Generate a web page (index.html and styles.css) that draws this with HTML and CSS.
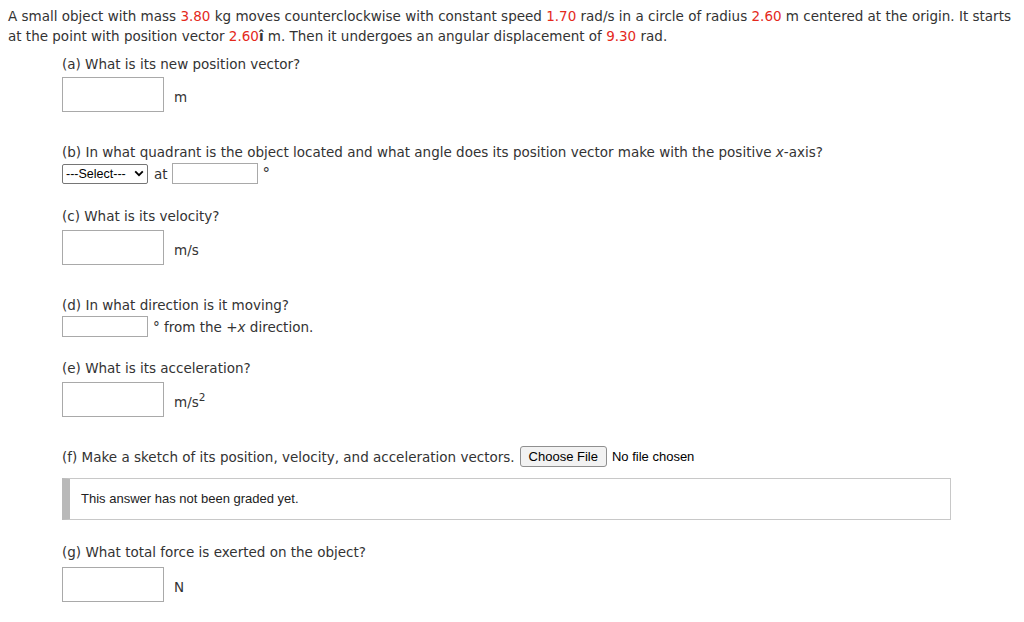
FILE: index.html
```html
<!DOCTYPE html>
<html>
<head>
<meta charset="utf-8">
<link rel="stylesheet" href="styles.css">
</head>
<body>
<p class="intro">A small object with mass <span class="red">3.80</span> kg moves counterclockwise with constant speed <span class="red">1.70</span> rad/s in a circle of radius <span class="red">2.60</span> m centered at the origin. It starts at the point with position vector <span class="red">2.60</span><b class="hat">î</b> m. Then it undergoes an angular displacement of <span class="red">9.30</span> rad.</p>

<div class="parts">
  <div class="part part-a">
    <div class="label">(a) What is its new position vector?</div>
    <div class="row big"><span class="box"></span><span class="unit">m</span></div>
  </div>

  <div class="part part-b">
    <div class="label">(b) In what quadrant is the object located and what angle does its position vector make with the positive <i>x</i>-axis?</div>
    <div class="row small">
      <span class="select">---Select---<svg class="chev" width="10" height="7" viewBox="0 0 10 7"><path d="M1.2 1.3 L5 5.2 L8.8 1.3" fill="none" stroke="#000" stroke-width="1.8"/></svg></span>
      <span class="at">at</span>
      <span class="box sm"></span>
      <span class="deg">°</span>
    </div>
  </div>

  <div class="part part-c">
    <div class="label">(c) What is its velocity?</div>
    <div class="row big"><span class="box"></span><span class="unit">m/s</span></div>
  </div>

  <div class="part part-d">
    <div class="label">(d) In what direction is it moving?</div>
    <div class="row small"><span class="box sm"></span><span class="dir">° from the +<i>x</i> direction.</span></div>
  </div>

  <div class="part part-e">
    <div class="label">(e) What is its acceleration?</div>
    <div class="row big"><span class="box"></span><span class="unit">m/s<sup>2</sup></span></div>
  </div>

  <div class="part part-f">
    <div class="frow"><span class="label">(f) Make a sketch of its position, velocity, and acceleration vectors.</span><span class="filebtn">Choose File</span><span class="nofile">No file chosen</span></div>
    <div class="graded">This answer has not been graded yet.</div>
  </div>

  <div class="part part-g">
    <div class="label">(g) What total force is exerted on the object?</div>
    <div class="row big"><span class="box"></span><span class="unit">N</span></div>
  </div>
</div>
</body>
</html>
```

FILE: styles.css
```css
html, body {
  margin: 0;
  padding: 0;
  background: #fff;
}
body {
  padding: 6px 8px 0 8px;
  font-family: "DejaVu Sans", Verdana, sans-serif;
  font-size: 13.5px;
  line-height: 20px;
  color: #333;
}
.intro {
  margin: 0;
}
.red {
  color: #e4291c;
}
.hat {
  font-weight: bold;
}
.parts {
  margin-left: 54px;
  margin-top: 8px;
}
.label {
  line-height: 20px;
}
.row {
  display: flex;
  align-items: center;
}
.row.big {
  margin-top: 3px;
  height: 35px;
}
.row.small {
  margin-top: 1px;
  height: 21px;
}
.box {
  display: block;
  box-sizing: border-box;
  width: 102px;
  height: 35px;
  border: 1px solid #a9a9a9;
  background: #fff;
}
.box.sm {
  width: 86px;
  height: 21px;
}
.unit {
  margin-left: 10px;
  padding-top: 5px;
}
.unit sup {
  font-size: 10.5px;
  line-height: 0;
  vertical-align: 6px;
}
.select {
  box-sizing: border-box;
  display: flex;
  align-items: center;
  justify-content: space-between;
  width: 86px;
  height: 20px;
  padding: 0 3px 0 3px;
  border: 1px solid #767676;
  border-radius: 2px;
  font-family: "Liberation Sans", Arial, sans-serif;
  font-size: 12.5px;
  color: #000;
}
.chev {
  display: block;
}
.at {
  margin-left: 6px;
  margin-right: 4px;
}
.deg {
  margin-left: 5px;
  font-size: 15px;
}
.dir {
  margin-left: 5px;
}
.part-b { margin-top: 30px; }
.part-c { margin-top: 22px; }
.part-c .row.big { margin-top: 4px; }
.part-d { margin-top: 30px; }
.part-e { margin-top: 21px; }
.part-e .row.big { margin-top: 4px; }
.part-f { margin-top: 29px; }
.part-g { margin-top: 22px; }
.part-g .row.big { margin-top: 5px; }
.frow {
  display: flex;
  align-items: center;
  height: 21px;
}
.filebtn {
  box-sizing: border-box;
  height: 21px;
  margin-left: 5px;
  padding: 0 8px;
  display: flex;
  align-items: center;
  border: 1px solid #8f8f8f;
  border-radius: 3px;
  background: #f2f2f2;
  font-family: "Liberation Sans", Arial, sans-serif;
  font-size: 13px;
  color: #000;
}
.nofile {
  margin-left: 5px;
  font-family: "Liberation Sans", Arial, sans-serif;
  font-size: 13px;
  color: #000;
}
.graded {
  box-sizing: border-box;
  margin-top: 11px;
  width: 889px;
  height: 42px;
  border: 1px solid #c8c8c8;
  border-left: 8px solid #b9b9b9;
  padding-left: 11px;
  display: flex;
  align-items: center;
  font-family: "Liberation Sans", Arial, sans-serif;
  font-size: 13px;
  color: #222;
}
```
